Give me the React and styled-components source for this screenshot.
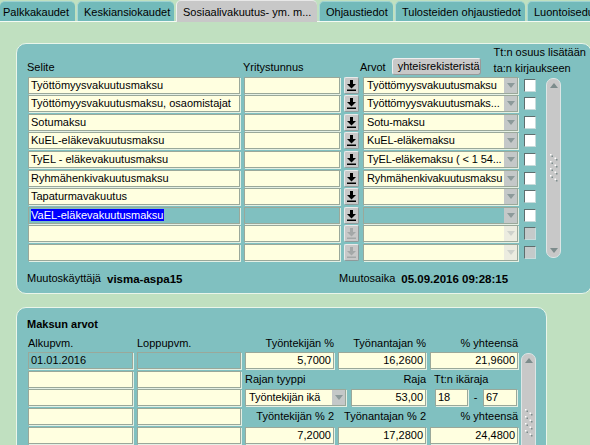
import React from 'react';
import styled, { createGlobalStyle } from 'styled-components';

const GlobalStyle = createGlobalStyle`
  body {
    margin: 0;
    background: #c0e0c0;
  }
`;

const tabs = [
  { label: 'Palkkakaudet', width: 75 },
  { label: 'Keskiansiokaudet', width: 97 },
  { label: 'Sosiaalivakuutus- ym. m...', width: 141, active: true },
  { label: 'Ohjaustiedot', width: 74 },
  { label: 'Tulosteiden ohjaustiedot', width: 130 },
  { label: 'Luontoisedut', width: 90 },
];

const rows = [
  { selite: 'Työttömyysvakuutusmaksu', arvo: 'Työttömyysvakuutusmaksu' },
  { selite: 'Työttömyysvakuutusmaksu, osaomistajat', arvo: 'Työttömyysvakuutusmaks...' },
  { selite: 'Sotumaksu', arvo: 'Sotu-maksu' },
  { selite: 'KuEL-eläkevakuutusmaksu', arvo: 'KuEL-eläkemaksu' },
  { selite: 'TyEL - eläkevakuutusmaksu', arvo: 'TyEL-eläkemaksu ( < 1 54...' },
  { selite: 'Ryhmähenkivakuutusmaksu', arvo: 'Ryhmähenkivakuutusmaksu' },
  { selite: 'Tapaturmavakuutus', arvo: '' },
  { selite: 'VaEL-eläkevakuutusmaksu', arvo: '', selected: true },
  { selite: '', arvo: '', disabled: true },
  { selite: '', arvo: '', disabled: true },
];

const YELLOW = '#ffffe0';
const TEAL = '#80c0c0';

const Page = styled.div`
  width: 590px;
  height: 445px;
  overflow: hidden;
  background: #c0e0c0;
  font-family: "Liberation Sans", Arial, sans-serif;
  font-size: 11px;
  color: #000;
`;

const TabBar = styled.div`
  display: flex;
  align-items: flex-end;
  gap: 2px;
  height: 21px;
  border-bottom: 1px solid #f4fbf4;
`;

const Tab = styled.div`
  flex-shrink: 0;
  box-sizing: border-box;
  width: ${p => p.$width}px;
  height: ${p => (p.$active ? 22 : 20)}px;
  margin-bottom: ${p => (p.$active ? -1 : 0)}px;
  padding: 0 0 0 6px;
  display: flex;
  align-items: center;
  white-space: nowrap;
  overflow: hidden;
  background: ${p => (p.$active ? '#c8c8c8' : '#72baba')};
  border-top: 1px solid ${p => (p.$active ? '#e8e8e8' : '#9ed2d2')};
  border-left: 1px solid ${p => (p.$active ? '#f0f0f0' : '#a8d6d6')};
  border-radius: 5px 5px 0 0;
  &:first-child {
    padding-left: 3px;
    border-left: none;
  }
`;

const Panel = styled.div`
  box-sizing: border-box;
  width: ${p => p.$width}px;
  margin: ${p => p.$top}px 0 0 16px;
  padding: ${p => p.$padTop}px 0 ${p => p.$padBottom}px 11px;
  background: ${TEAL};
  border: 1px solid #eaf5ea;
  border-radius: 10px;
`;

const TopGrid = styled.div`
  display: grid;
  grid-template-columns: 212px 96px 15px 155px 14px 21px;
  grid-template-rows: 29px repeat(10, 17px);
  column-gap: 4px;
  row-gap: 1.6px;
`;

const HeadLabel = styled.div`
  align-self: end;
  line-height: 16px;
  white-space: nowrap;
  margin-left: -1px;
`;

const ArvotGroup = styled.div`
  grid-column: 4 / span 3;
  display: flex;
  align-items: flex-end;
  margin-left: -2px;
`;

const RegButton = styled.div`
  box-sizing: border-box;
  height: 17px;
  width: 89px;
  margin-left: 6px;
  padding-left: 5px;
  line-height: 15px;
  background: #c8c8c8;
  border: 1px solid;
  border-color: #eeeeee #9a9a9a #9a9a9a #eeeeee;
  border-radius: 3px;
  white-space: nowrap;
`;

const TtNote = styled.div`
  margin-left: 13px;
  margin-bottom: -1px;
  line-height: 16px;
  white-space: nowrap;
`;

const Field = styled.div`
  box-sizing: border-box;
  height: 17px;
  padding: 0 2px;
  line-height: 15px;
  background: ${p => p.$bg || YELLOW};
  border: 1px solid #9aa89a;
  box-shadow: 1px 1px 0 #e4f0e4;
  text-align: ${p => p.$align || 'left'};
  white-space: nowrap;
  overflow: hidden;
  width: ${p => (p.$w ? `${p.$w}px` : 'auto')};
  flex-shrink: 0;
`;

const Marked = styled.span`
  background: #0000ff;
  color: #fff;
  padding-right: 1px;
`;

const DownBtn = styled.div`
  box-sizing: border-box;
  height: 17px;
  background: #c8c8c8;
  border: 1px solid;
  border-color: #eaeaea #8e9a9a #8e9a9a #eaeaea;
  border-radius: 2px;
  display: flex;
  align-items: center;
  justify-content: center;
`;

const SelectBox = styled.div`
  box-sizing: border-box;
  display: flex;
  height: 17px;
  width: ${p => (p.$w ? `${p.$w}px` : 'auto')};
  flex-shrink: 0;
  background: ${p => p.$bg || YELLOW};
  border: 1px solid #9aa89a;
  box-shadow: 1px 1px 0 #e4f0e4;
`;

const SelectText = styled.div`
  flex: 1;
  padding-left: 3px;
  line-height: 15px;
  white-space: nowrap;
  overflow: hidden;
  letter-spacing: -0.1px;
`;

const SelectArrow = styled.div`
  width: 13px;
  flex-shrink: 0;
  display: flex;
  align-items: center;
  justify-content: center;
  background: ${p => (p.$disabled ? '#ecece0' : '#c4c8c8')};
`;

const Check = styled.div`
  justify-self: end;
  align-self: center;
  box-sizing: border-box;
  width: 12px;
  height: 13px;
  background: ${p => (p.$disabled ? '#c4caca' : '#fff')};
  border: 1px solid;
  border-color: #5e6e6e #c8dcdc #c8dcdc #5e6e6e;
`;

const Scroll = styled.div`
  justify-self: end;
  box-sizing: border-box;
  width: 15px;
  height: ${p => (p.$h ? `${p.$h}px` : 'auto')};
  grid-row: ${p => p.$rows};
  grid-column: 6;
  margin: 1px 0 3px;
  background: #c8c8c8;
  border: 1px solid #dde6e6;
  border-radius: 7px;
  display: flex;
  flex-direction: column;
  align-items: center;
  justify-content: space-between;
  padding: 4px 0;
`;

const Grip = styled.div`
  display: flex;
`;

const Footer = styled.div`
  display: flex;
  margin-top: 10px;
  line-height: 14px;
  white-space: nowrap;
`;

const FooterGroup = styled.div`
  display: flex;
  align-items: baseline;
  gap: 6px;
  width: ${p => (p.$w ? `${p.$w}px` : 'auto')};
  margin-left: -1px;
`;

const Strong = styled.span`
  font-weight: bold;
  font-size: 11.5px;
  position: relative;
  top: 1px;
`;

const Title = styled.div`
  font-weight: bold;
  line-height: 16px;
  margin-left: -1px;
`;

const BottomGrid = styled.div`
  display: grid;
  grid-template-columns: 105px 104px 89px 88px 88px 14px;
  grid-template-rows: 14.3px;
  grid-auto-rows: 17px;
  column-gap: 4px;
  row-gap: 1.7px;
  margin-top: 4px;
`;

const Label = styled.div`
  line-height: ${p => (p.$h ? p.$h : 17)}px;
  text-align: ${p => p.$align || 'left'};
  padding-left: ${p => p.$pl || 0}px;
  white-space: nowrap;
`;

const Pair = styled.div`
  grid-column: ${p => p.$col};
  display: flex;
  gap: ${p => p.$gap || 0}px;
  padding-left: ${p => p.$pl || 0}px;
  align-items: center;
`;

const Dash = styled.div`
  width: 15px;
  text-align: center;
  line-height: 17px;
`;

const DownloadIcon = ({ disabled }) => (
  <svg width="9" height="11" viewBox="0 0 9 11">
    <g fill={disabled ? '#a4a8a8' : '#000'}>
      <rect x="3" y="0" width="3" height="4" />
      <polygon points="0,4 9,4 4.5,8.5" />
      <rect x="0" y="9.5" width="9" height="1.5" />
    </g>
  </svg>
);

const Triangle = ({ up, color }) => (
  <svg width="8" height="5" viewBox="0 0 8 5">
    <polygon points={up ? '0,5 8,5 4,0' : '0,0 8,0 4,5'} fill={color} />
  </svg>
);

const GripDots = () => (
  <svg width="8" height="28" viewBox="0 0 8 28">
    {[0, 1, 2, 3].map(i => (
      <g key={i}>
        <rect x="0" y={i * 7} width="1.5" height="1.5" fill="#fff" />
        <rect x="1.5" y={i * 7 + 1.5} width="1.5" height="1.5" fill="#7d8c8c" />
        <rect x="4.5" y={i * 7 + 3.5} width="1.5" height="1.5" fill="#fff" />
        <rect x="6" y={i * 7 + 5} width="1.5" height="1.5" fill="#7d8c8c" />
      </g>
    ))}
  </svg>
);

const Scrollbar = ({ rows, h }) => (
  <Scroll $rows={rows} $h={h}>
    <Triangle up color="#7d8c8c" />
    <Grip>
      <GripDots />
    </Grip>
    <Triangle color="#7d8c8c" />
  </Scroll>
);

const Select = ({ text, bg, disabled, w }) => (
  <SelectBox $bg={bg} $w={w}>
    <SelectText>{text}</SelectText>
    <SelectArrow $disabled={disabled}>
      <Triangle color={disabled ? '#cfd2cc' : '#8c9a9a'} />
    </SelectArrow>
  </SelectBox>
);

const App = () => (
  <Page>
    <GlobalStyle />
    <TabBar>
      {tabs.map(t => (
        <Tab key={t.label} $width={t.width} $active={t.active}>
          {t.label}
        </Tab>
      ))}
    </TabBar>

    <Panel $width={576} $top={21} $padTop={2} $padBottom={8}>
      <TopGrid>
        <HeadLabel>Selite</HeadLabel>
        <HeadLabel>Yritystunnus</HeadLabel>
        <div />
        <ArvotGroup>
          <HeadLabel>Arvot</HeadLabel>
          <RegButton>yhteisrekisteristä</RegButton>
          <TtNote>
            Tt:n osuus lisätään
            <br />
            ta:n kirjaukseen
          </TtNote>
        </ArvotGroup>

        {rows.map((r, i) => (
          <React.Fragment key={i}>
            <Field $bg={r.selected ? TEAL : YELLOW}>
              {r.selected ? <Marked>{r.selite}</Marked> : r.selite}
            </Field>
            <Field $bg={r.selected ? TEAL : YELLOW} />
            <DownBtn>
              <DownloadIcon disabled={r.disabled} />
            </DownBtn>
            <Select text={r.arvo} bg={r.selected ? TEAL : YELLOW} disabled={r.disabled} />
            <Check $disabled={r.disabled} />
          </React.Fragment>
        ))}
        <Scrollbar rows="2 / span 10" />
      </TopGrid>

      <Footer>
        <FooterGroup $w={313}>
          Muutoskäyttäjä <Strong>visma-aspa15</Strong>
        </FooterGroup>
        <FooterGroup>
          Muutosaika <Strong>05.09.2016 09:28:15</Strong>
        </FooterGroup>
      </Footer>
    </Panel>

    <Panel $width={531} $top={13} $padTop={8} $padBottom={20}>
      <Title>Maksun arvot</Title>
      <BottomGrid>
        <Label $h={14}>Alkupvm.</Label>
        <Label $h={14}>Loppupvm.</Label>
        <Label $h={14} $align="right">Työntekijän %</Label>
        <Label $h={14} $align="right">Työnantajan %</Label>
        <Label $h={14} $align="right">% yhteensä</Label>
        <div />

        <Field $bg={TEAL}>01.01.2016</Field>
        <Field $bg={TEAL} />
        <Field $align="right">5,7000</Field>
        <Field $align="right">16,2600</Field>
        <Field $align="right">21,9600</Field>
        <Scrollbar rows="2 / span 5" h={140} />

        <Field />
        <Field />
        <Label>Rajan tyyppi</Label>
        <Label $align="right">Raja</Label>
        <Label $pl={4}>Tt:n ikäraja</Label>

        <Field />
        <Field />
        <Pair $col="3 / span 2" $gap={5}>
          <Select text="Työntekijän ikä" w={101} />
          <Field $w={75} $align="right">53,00</Field>
        </Pair>
        <Pair $col="5" $pl={5}>
          <Field $w={33}>18</Field>
          <Dash>-</Dash>
          <Field $w={34}>67</Field>
        </Pair>

        <Field />
        <Field />
        <Label $align="right">Työntekijän % 2</Label>
        <Label $align="right">Työnantajan % 2</Label>
        <Label $align="right">% yhteensä</Label>

        <Field />
        <Field />
        <Field $align="right">7,2000</Field>
        <Field $align="right">17,2800</Field>
        <Field $align="right">24,4800</Field>
      </BottomGrid>
    </Panel>
  </Page>
);

export default App;
